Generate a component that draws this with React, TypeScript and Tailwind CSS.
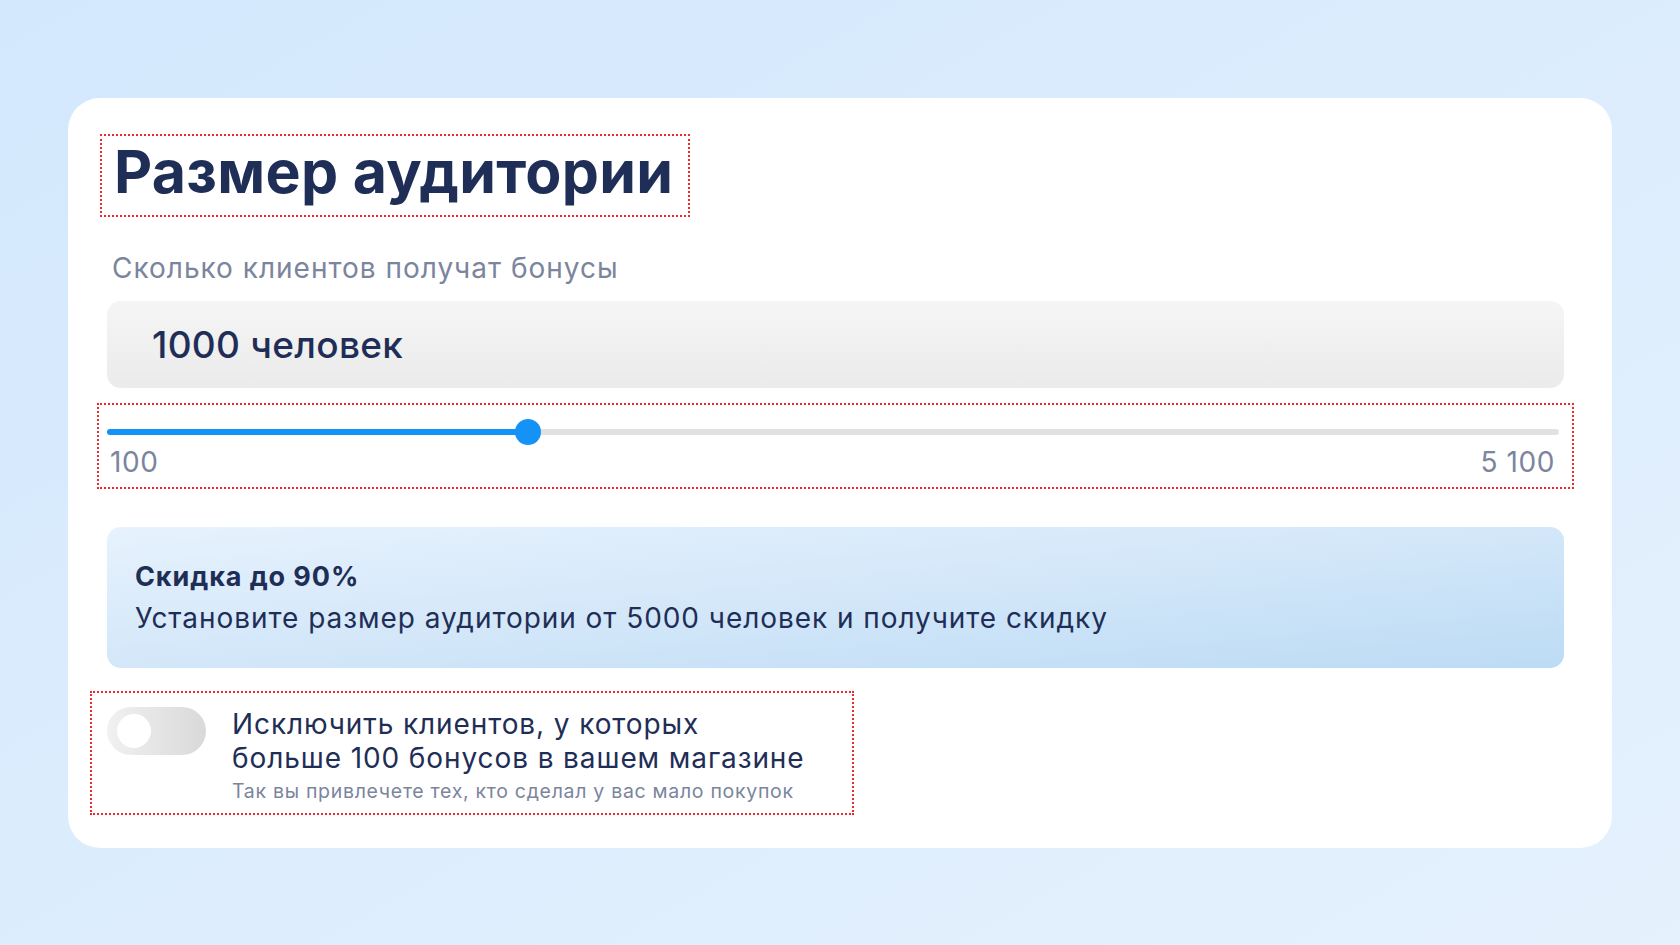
import { useState } from "react";

const MIN = 100;
const MAX = 5100;

function AudienceSlider({ percent }: { percent: number }) {
  return (
    <div className="-mx-[10px] border-2 border-dotted border-[#f0282d] pl-[8px] pr-[13px] pt-[24px] pb-[8px]">
      <div className="relative h-[6px] rounded-full bg-[#e1e1e1]">
        <div
          className="absolute left-0 top-0 h-full rounded-full bg-[#1592f6]"
          style={{ width: `${percent}%` }}
        />
        <div
          className="absolute top-1/2 h-[26px] w-[26px] -translate-x-1/2 -translate-y-1/2 rounded-full bg-[#1592f6]"
          style={{ left: `${percent}%` }}
        />
      </div>
      <div className="mt-[10px] flex justify-between pl-[3px] pr-[4px] text-[28px] leading-[34px] tracking-[0.6px] text-[#7b859d]">
        <span>{MIN}</span>
        <span>{MAX.toLocaleString("ru-RU").replace(/\s/g, " ")}</span>
      </div>
    </div>
  );
}

function Toggle({ on, onChange }: { on: boolean; onChange: (v: boolean) => void }) {
  return (
    <button
      type="button"
      onClick={() => onChange(!on)}
      className="relative h-[48px] w-[99px] shrink-0 rounded-full bg-gradient-to-r from-[#f1f1f1] to-[#d9d9d9]"
    >
      <span className="absolute left-[10px] top-[7px] h-[34px] w-[34px] rounded-full bg-white" />
    </button>
  );
}

export default function App() {
  const [exclude, setExclude] = useState(false);

  return (
    <div
      className="min-h-screen w-full bg-gradient-to-br from-[#d3e8fd] to-[#e5f1fd] px-[68px] pt-[98px] pb-[99px]"
      style={{ fontFamily: "Inter, 'Noto Sans', sans-serif" }}
    >
      <div className="rounded-[32px] bg-white pl-[39px] pr-[48px] pt-[36px] pb-[33px]">
        {/* title */}
        <div className="-ml-[7px] inline-block border-2 border-dotted border-[#f0282d] pl-[12px] pr-[15px] pt-[7px] pb-[14px]">
          <h1 className="text-[59px] font-bold leading-[58px] tracking-[0.3px] text-[#1f2e56]">
            Размер аудитории
          </h1>
        </div>

        <p className="mt-[34px] pl-[5px] text-[28px] leading-[34px] tracking-[1px] text-[#7b859d]">
          Сколько клиентов получат бонусы
        </p>

        <div className="mt-[16px] flex h-[87px] items-center rounded-[14px] bg-gradient-to-b from-[#f5f5f5] to-[#ebebeb] pl-[45px]">
          <span className="text-[37px] font-medium leading-none tracking-[0.3px] text-[#1f2e56]">
            1000 человек
          </span>
        </div>

        <div className="mt-[15px]">
          <AudienceSlider percent={29} />
        </div>

        <div className="mt-[38px] flex h-[141px] flex-col justify-center rounded-[14px] bg-gradient-to-br from-[#e7f2fd] via-[#d3e7f9] to-[#bcdbf4] pl-[28px]">
          <div className="text-[27px] font-bold leading-[32px] tracking-[0.9px] text-[#1f2e56]">
            Скидка до 90%
          </div>
          <div className="mt-[8px] text-[28px] leading-[34px] tracking-[0.95px] text-[#1f2e56]">
            Установите размер аудитории от 5000 человек и получите скидку
          </div>
        </div>

        <div className="mt-[23px] -ml-[17px] inline-flex border-2 border-dotted border-[#f0282d] pl-[15px] pr-[47px] pt-[14px] pb-[10px]">
          <Toggle on={exclude} onChange={setExclude} />
          <div className="ml-[26px] flex flex-col">
            <div className="text-[28px] leading-[34px] tracking-[0.9px] text-[#1f2e56]">
              Исключить клиентов, у которых
              <br />
              больше 100 бонусов в вашем магазине
            </div>
            <div className="mt-[4px] text-[19.5px] leading-[24px] tracking-[0.7px] text-[#7b859d]">
              Так вы привлечете тех, кто сделал у вас мало покупок
            </div>
          </div>
        </div>
      </div>
    </div>
  );
}
